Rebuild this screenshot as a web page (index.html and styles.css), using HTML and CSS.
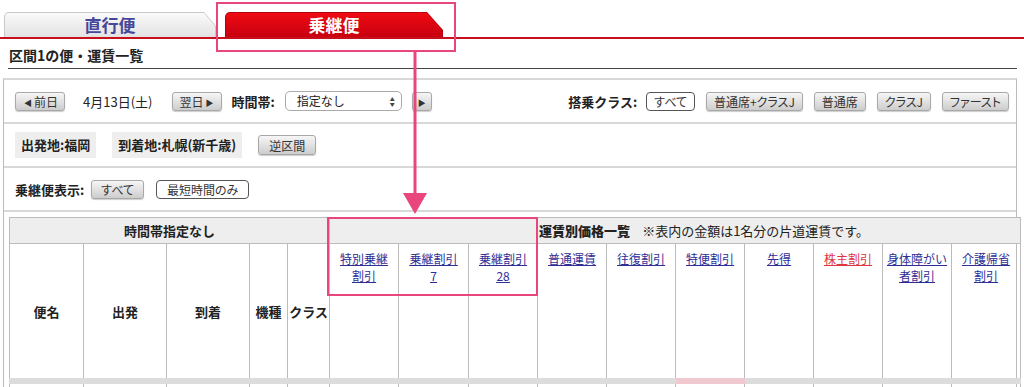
FILE: index.html
```html
<!DOCTYPE html>
<html lang="ja">
<head>
  <meta charset="UTF-8">
  <title>区間1の便・運賃一覧</title>
  <link rel="stylesheet" href="styles.css">
</head>
<body>

<div class="tabs">
  <div class="tab tab-gray"><div class="tab-inner">直行便</div></div>
  <div class="tab tab-red"><div class="tab-inner">乗継便</div></div>
</div>

<h2 class="section-title">区間1の便・運賃一覧</h2>

<div class="panel">
  <div class="panel-row">
    <button class="btn btn-prev"><span class="tri">◀</span>前日</button>
    <span class="date">4月13日(土)</span>
    <button class="btn btn-next">翌日<span class="tri">▶</span></button>
    <span class="label label-time">時間帯:</span>
    <div class="select">指定なし<span class="select-arrows">▲<br>▼</span></div>
    <button class="btn btn-go"><span class="tri">▶</span></button>

    <div class="class-group">
      <span class="label">搭乗クラス:</span>
      <button class="btn btn-on">すべて</button>
      <button class="btn">普通席+クラスJ</button>
      <button class="btn">普通席</button>
      <button class="btn">クラスJ</button>
      <button class="btn">ファースト</button>
    </div>
  </div>

  <div class="panel-row">
    <span class="place">出発地:福岡</span>
    <span class="place place-to">到着地:札幌(新千歳)</span>
    <button class="btn btn-reverse">逆区間</button>
  </div>

  <div class="panel-row">
    <span class="label">乗継便表示:</span>
    <button class="btn btn-all">すべて</button>
    <button class="btn btn-on btn-short">最短時間のみ</button>
  </div>

  <table class="fares">
    <colgroup>
      <col style="width:74px"><col style="width:83px"><col style="width:83px">
      <col style="width:38px"><col style="width:42px">
      <col style="width:69px"><col style="width:70px"><col style="width:69px">
      <col style="width:69px"><col style="width:69px"><col style="width:69px">
      <col style="width:69px"><col style="width:69px"><col style="width:69px">
      <col style="width:69px">
    </colgroup>
    <thead>
      <tr class="head-top">
        <th colspan="5">時間帯指定なし</th>
        <th colspan="10" class="fare-title"><b>運賃別価格一覧</b><span class="note">※表内の金額は1名分の片道運賃です。</span></th>
      </tr>
      <tr class="head-main">
        <th>便名</th>
        <th>出発</th>
        <th>到着</th>
        <th>機種</th>
        <th>クラス</th>
        <th class="fare"><a href="#"><span>特別乗継</span><span>割引</span></a></th>
        <th class="fare"><a href="#"><span>乗継割引</span><span>7</span></a></th>
        <th class="fare"><a href="#"><span>乗継割引</span><span>28</span></a></th>
        <th class="fare"><a href="#"><span>普通運賃</span></a></th>
        <th class="fare"><a href="#"><span>往復割引</span></a></th>
        <th class="fare"><a href="#"><span>特便割引</span></a></th>
        <th class="fare"><a href="#"><span>先得</span></a></th>
        <th class="fare"><a href="#" class="red"><span>株主割引</span></a></th>
        <th class="fare"><a href="#"><span>身体障がい</span><span>者割引</span></a></th>
        <th class="fare"><a href="#"><span>介護帰省</span><span>割引</span></a></th>
      </tr>
    </thead>
    <tbody>
      <tr class="row-first">
        <td></td><td></td><td></td><td></td><td></td>
        <td></td><td></td><td></td><td></td><td></td>
        <td class="pink"></td><td></td><td></td><td></td><td></td>
      </tr>
    </tbody>
  </table>
</div>

<svg class="marks" width="1024" height="387" viewBox="0 0 1024 387">
  <rect x="217" y="3" width="238" height="48" fill="none" stroke="#e9467e" stroke-width="2"/>
  <line x1="415" y1="51" x2="415" y2="196" stroke="#e9467e" stroke-width="3"/>
  <polygon points="403,193 427,193 415,214" fill="#e9467e"/>
  <rect x="328" y="218" width="209" height="77" fill="none" stroke="#e9467e" stroke-width="2"/>
</svg>

</body>
</html>
```

FILE: styles.css
```css
body {
  margin: 0;
  font-family: "Noto Sans CJK JP", "Liberation Sans", sans-serif;
  font-size: 13px;
  color: #222;
  background: #fff;
  position: relative;
  overflow: hidden;
  height: 387px;
}

/* tabs */
.tabs {
  display: flex;
  align-items: flex-end;
  height: 37px;
  padding-left: 4px;
  border-bottom: 2px solid #c8101c;
}
.tab {
  height: 25px;
  padding: 1px 1px 0;
  border-radius: 5px 0 0 0;
  box-sizing: border-box;
}
.tab-inner {
  height: 100%;
  border-radius: 4px 0 0 0;
  text-align: center;
  font-size: 17px;
  font-weight: bold;
  line-height: 24px;
}
.tab-gray {
  width: 212px;
  background: #c9c9c9;
  clip-path: polygon(0 0, 200px 0, 212px 14px, 212px 100%, 0 100%);
}
.tab-gray .tab-inner {
  background: linear-gradient(#fafafa, #e2e2e2);
  color: #46469a;
  clip-path: polygon(0 0, 199px 0, 210px 13px, 210px 100%, 0 100%);
}
.tab-red {
  width: 218px;
  margin-left: 9px;
  background: #b00010;
  clip-path: polygon(0 0, 202px 0, 218px 18px, 218px 100%, 0 100%);
}
.tab-red .tab-inner {
  background: linear-gradient(#ee0a12, #c80010);
  color: #fff;
  clip-path: polygon(0 0, 201px 0, 216px 17px, 216px 100%, 0 100%);
}

.section-title {
  margin: 0 7px 0 8px;
  padding: 6px 0 3px 1px;
  font-size: 14px;
  line-height: 20px;
  border-bottom: 1px solid #444;
}

/* search panel */
.panel {
  margin: 9px 7px 0 3px;
  border: 1px solid #bbb;
  border-top: 2px solid #d8d8d8;
  border-bottom: none;
}
.panel-row {
  display: flex;
  align-items: center;
  height: 42px;
  padding: 0 7px 0 11px;
  border-bottom: 2px solid #d8d8d8;
}
.label {
  font-weight: bold;
}
.date {
  margin-left: 18px;
}
.btn-next {
  margin-left: 20px;
}
.label-time {
  margin-left: 9px;
}
.btn {
  font-family: inherit;
  font-size: 12px;
  font-feature-settings: "palt";
  height: 19px;
  line-height: 17px;
  padding: 0 9px;
  color: #333;
  background: linear-gradient(#f6f6f6, #cdcdcd);
  border: 1px solid #a8a8a8;
  border-radius: 3px;
  box-shadow: 0 1px 1px rgba(0, 0, 0, 0.2);
  white-space: nowrap;
}
.btn-prev,
.btn-next {
  padding: 0 6px;
}
.btn-on {
  background: #fff;
  border-color: #555;
  border-radius: 4px;
  box-shadow: none;
}
.tri {
  font-size: 8px;
  vertical-align: 1px;
  margin: 0 2px;
}
.select {
  margin-left: 10px;
  width: 117px;
  height: 20px;
  box-sizing: border-box;
  border: 1px solid #aaa;
  border-radius: 5px;
  padding-left: 11px;
  line-height: 18px;
  font-size: 12px;
  position: relative;
  background: #fff;
}
.select-arrows {
  position: absolute;
  right: 6px;
  top: 4px;
  font-size: 5px;
  line-height: 5px;
  color: #444;
}
.btn-go {
  margin-left: 10px;
  padding: 0 3px;
}
.class-group {
  margin-left: auto;
  display: flex;
  align-items: center;
  gap: 11px;
}
.class-group .btn {
  padding: 0 7px;
}
.class-group .label {
  margin-right: -2px;
}

.place {
  background: #eeeeee;
  font-weight: bold;
  padding: 0 6px;
  line-height: 26px;
}
.place-to {
  margin-left: 16px;
}
.btn-reverse {
  margin-left: 16px;
  padding: 0 10px;
  height: 20px;
}
.btn-all {
  margin-left: 7px;
}
.btn-short {
  margin-left: 12px;
  padding: 0 10px;
}

/* fare table */
.fares {
  margin: 5px 0 0 5px;
  width: 1011px;
  table-layout: fixed;
  border-collapse: collapse;
}
.fares th,
.fares td {
  border: 1px solid #bcbcbc;
  padding: 0;
}
.head-top th {
  height: 25px;
  background: #eeeeee;
  font-size: 13px;
}
.fares .fare-title {
  text-align: center;
  padding-left: 58px;
}
.fare-title .note {
  font-weight: normal;
  margin-left: 12px;
}
.head-main th {
  height: 128px;
  font-size: 13px;
}
.head-main th.fare {
  vertical-align: top;
  font-weight: normal;
  padding-top: 6px;
  font-size: 12px;
  line-height: 17px;
  white-space: nowrap;
}
.fare a {
  display: block;
  color: #2e2e96;
}
.fare a span {
  display: block;
  width: max-content;
  margin: 0 auto;
  text-decoration: underline;
}
.fare a.red {
  color: #e0353f;
}
.row-first td {
  height: 30px;
  border-top: 6px solid #dcdcdc;
}
.row-first td.pink {
  border-top-color: #f0c8d0;
}

/* annotation overlay */
.marks {
  position: absolute;
  top: 0;
  left: 0;
  pointer-events: none;
}
```
